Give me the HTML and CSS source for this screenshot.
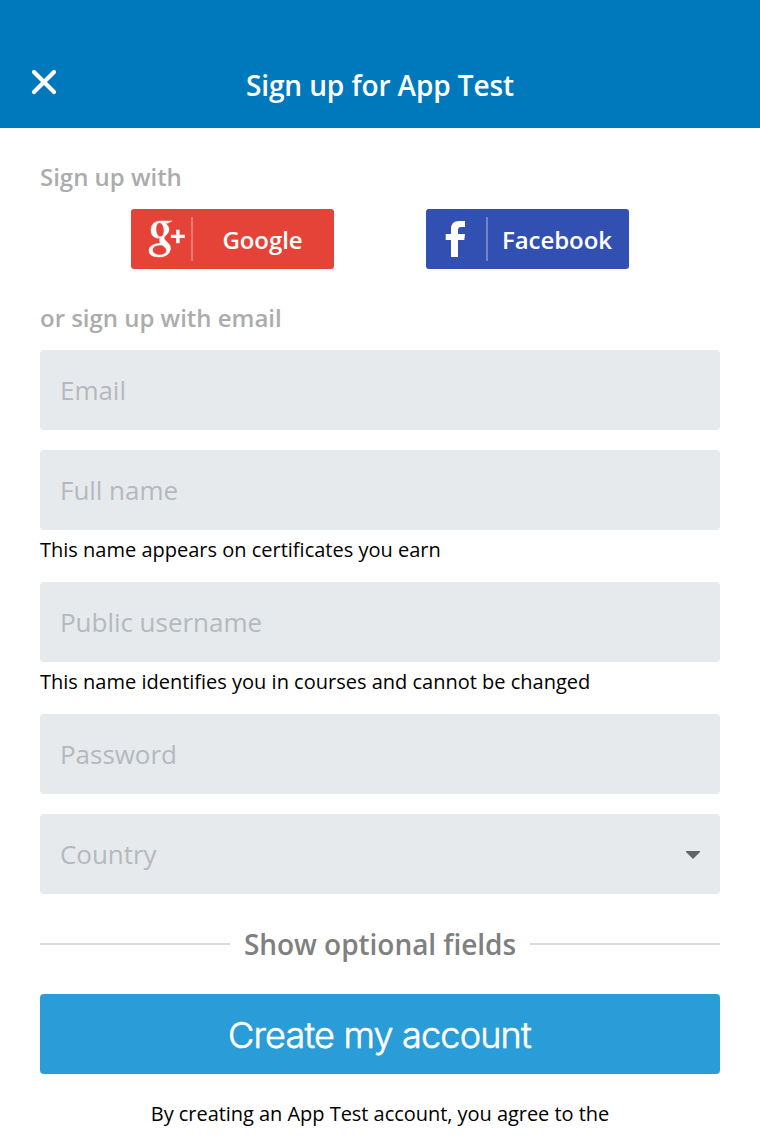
FILE: index.html
```html
<!DOCTYPE html>
<html lang="en">
<head>
<meta charset="utf-8">
<title>Sign up</title>
<link rel="stylesheet" href="styles.css">
</head>
<body>
<header class="header">
  <button class="close" aria-label="Close"><svg width="26" height="26" viewBox="0 0 26 26"><path d="M3 3L23 23M23 3L3 23" stroke="#fff" stroke-width="4.2" stroke-linecap="round"/></svg></button>
  <h1 class="title">Sign up for App Test</h1>
</header>
<main class="form">
  <h2 class="label">Sign up with</h2>
  <div class="social">
    <button class="provider google">
      <svg class="logo" width="40" height="44" viewBox="0 0 40 44" fill="#fff"><path fill-rule="evenodd" stroke="#fff" stroke-width=".5" d="M24 4L19.500 6.200H17Q21 8.500 21 12.500Q21 16 17 19Q15 21 17 23L20 26Q23 28.500 22.500 32Q21 40 11 40Q1 40 1 33.500Q1 27 12.500 26.300Q11 24.500 12 21.300Q3 21.500 3 13Q3 4 13.500 4ZM11.300 5.700C6.300 6 7 20 12.700 19.800C18 19.300 16.500 5.200 11.300 5.700ZM14 28C7 28 4.500 30 4.500 33C4.500 39.300 18.500 39.800 18.500 33.500C18.500 31.500 17 30 14 28Z"/><path d="M28.200 12.700H31.600V17.800H36.800V21.100H31.600V26.300H28.200V21.100H22.900V17.800H28.200Z"/></svg>
      <span class="name">Google</span>
    </button>
    <button class="provider facebook">
      <svg class="logo" width="40" height="44" viewBox="0 0 40 44"><path d="M8 40V23H2.700V17H8V12Q8 4 16 4H22V10H18Q15 10 15 13V17H22L21.300 23H15V40Z" fill="#fff"/></svg>
      <span class="name">Facebook</span>
    </button>
  </div>
  <h2 class="label email-label">or sign up with email</h2>
  <div class="field"><span class="placeholder">Email</span></div>
  <div class="field"><span class="placeholder">Full name</span></div>
  <p class="hint">This name appears on certificates you earn</p>
  <div class="field"><span class="placeholder">Public username</span></div>
  <p class="hint">This name identifies you in courses and cannot be changed</p>
  <div class="field"><span class="placeholder">Password</span></div>
  <div class="field"><span class="placeholder">Country</span><svg class="caret" width="14" height="8" viewBox="0 0 14 8"><path d="M0 0H14V1L7 8L0 1Z" fill="#666364"/></svg></div>
  <div class="optional"><span class="optional-text">Show optional fields</span></div>
  <button class="submit">Create my account</button>
  <p class="terms">By creating an App Test account, you agree to the</p>
</main>
</body>
</html>
```
FILE: styles.css
```css
* { box-sizing: border-box; }
body { margin: 0; background: #fff; font-family: "Open Sans", sans-serif; overflow: hidden; }
button { border: 0; padding: 0; font-family: inherit; }
.header { height: 128px; background: #0079bc; display: grid; grid-template-columns: 88px 1fr 88px; padding-top: 44px; }
.close { background: none; width: 26px; height: 26px; margin: 25px 0 0 31px; }
.close svg { display: block; }
.title { margin: 0; color: #fff; font-size: 28px; font-weight: 600; line-height: 83px; letter-spacing: -.1px; text-align: center; }
.form { padding: 33px 40px 0; }
.label { margin: 0; height: 32px; line-height: 32px; font-size: 24px; font-weight: 600; color: #acacac; letter-spacing: -.02px; }
.social { display: flex; justify-content: space-between; margin: 16px 91px 0; }
.provider { width: 203px; height: 60px; border-radius: 3px; color: #fff; display: flex; align-items: center; }
.google { background: #e64338; }
.facebook { background: #324fb2; }
.logo { display: block; margin-left: 17px; }
.name { flex: 1; height: 44px; line-height: 46px; margin-left: 3px; padding-right: 3px; border-left: 2px solid rgba(255,255,255,.3); font-size: 24px; font-weight: 600; letter-spacing: -.05px; text-align: center; }
.google .name { padding-right: 2px; }
.email-label { margin: 33px 0 16px; }
.field { height: 80px; margin-bottom: 20px; padding: 0 20px; border-radius: 4px; background: #e6eaed; display: flex; align-items: center; justify-content: space-between; }
.placeholder { font-size: 26px; color: #b5b9be; letter-spacing: -.03px; }
.caret { margin-top: 2px; }
.hint { margin: -20px 0 0; height: 52px; line-height: 40px; font-size: 20px; color: #000; }
.optional { display: flex; align-items: center; gap: 14px; height: 60px; }
.optional::before, .optional::after { content: ""; flex: 1; height: 2px; background: #dadada; }
.optional-text { font-size: 28px; font-weight: 600; letter-spacing: -.04px; color: #808080; }
.submit { display: block; width: 100%; height: 80px; margin-top: 20px; border-radius: 4px; background: #2a9dd9; color: #fff; font: 300 36px/82px Inter, sans-serif; letter-spacing: -.8px; -webkit-text-stroke: .6px #fff; padding-right: 1px; }
.terms { margin: 20px 0 0; line-height: 40px; font-size: 20px; letter-spacing: -.04px; text-align: center; color: #000; }
```
